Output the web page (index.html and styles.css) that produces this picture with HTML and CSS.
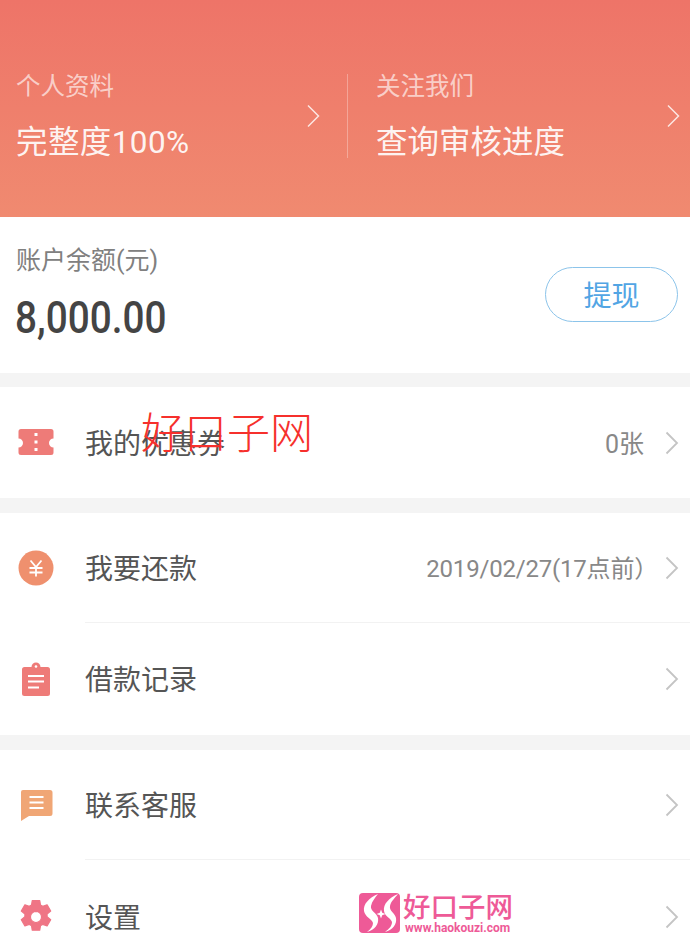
FILE: index.html
```html
<!DOCTYPE html>
<html lang="zh-CN">
<head>
    <meta charset="UTF-8">
    <meta name="viewport" content="width=device-width, initial-scale=1.0">
    <title>我的</title>
    <link rel="stylesheet" href="styles.css">
</head>
<body>

    <div class="page">
        <div class="head">
            <div class="head-col head-left">
                <div class="head-text">
                    <p class="head-label">个人资料</p>
                    <p class="head-value head-value-wide">完整度100%</p>
                </div>
                <svg class="head-arrow" viewBox="0 0 14 24"><path d="M2 1.500L12.500 12L2 22.500"/></svg>
            </div>
            <div class="head-col head-right">
                <div class="head-text">
                    <p class="head-label">关注我们</p>
                    <p class="head-value">查询审核进度</p>
                </div>
                <svg class="head-arrow" viewBox="0 0 14 24"><path d="M2 1.500L12.500 12L2 22.500"/></svg>
            </div>
        </div>

        <div class="balance">
            <div class="balance-text">
                <p class="balance-label">账户余额(元)</p>
                <p class="balance-num">8,000.00</p>
            </div>
            <button class="withdraw">提现</button>
        </div>

        <div class="group">
            <div class="row row-coupon">
                <svg class="icon" viewBox="0 0 36 36">
                    <path fill="#ee7b78" d="M3 4h30a2.500 2.500 0 0 1 2.500 2.500v7a4.500 4.500 0 0 0 0 9v5a2.500 2.500 0 0 1-2.500 2.500H3a2.500 2.500 0 0 1-2.500-2.500v-5a4.500 4.500 0 0 0 0-9v-7A2.500 2.500 0 0 1 3 4z"/>
                    <path fill="#fff" d="M16.500 8h3v3h-3zM16.500 15.500h3v3h-3zM16.500 23h3v3h-3z"/>
                </svg>
                <div class="row-body">
                    <span class="row-title">我的优惠券</span>
                    <span class="row-extra">0张</span>
                    <svg class="row-arrow" viewBox="0 0 14 24"><path d="M1.500 1.500L12 12L1.500 22.500"/></svg>
                </div>
            </div>
        </div>

        <div class="group">
            <div class="row">
                <svg class="icon" viewBox="0 0 36 36">
                    <circle fill="#ef906e" cx="18" cy="18" r="17.500"/>
                    <path fill="none" stroke="#fff" stroke-width="1.800" d="M12.500 10.500L18 17l5.500-6.500M11.500 18h13M11.500 22.500h13M18 17v9.500"/>
                </svg>
                <div class="row-body row-line">
                    <span class="row-title">我要还款</span>
                    <span class="row-extra row-date">2019/02/27(17点前）</span>
                    <svg class="row-arrow" viewBox="0 0 14 24"><path d="M1.500 1.500L12 12L1.500 22.500"/></svg>
                </div>
            </div>
            <div class="row row-tall">
                <svg class="icon" viewBox="0 0 36 36">
                    <path fill="#ee7b78" d="M6.500 6h7a4.500 4.500 0 0 1 9 0h7A2.500 2.500 0 0 1 32 8.500v24a2.500 2.500 0 0 1-2.500 2.500h-23A2.500 2.500 0 0 1 4 32.500v-24A2.500 2.500 0 0 1 6.500 6z"/>
                    <path fill="none" stroke="#fff" stroke-width="2" d="M10 15h16M10 20.500h16M10 26.500h11"/>
                    <circle fill="#fff" cx="18" cy="5.500" r="1.300"/>
                </svg>
                <div class="row-body">
                    <span class="row-title">借款记录</span>
                    <svg class="row-arrow" viewBox="0 0 14 24"><path d="M1.500 1.500L12 12L1.500 22.500"/></svg>
                </div>
            </div>
        </div>

        <div class="group">
            <div class="row">
                <svg class="icon" viewBox="0 0 36 36">
                    <path fill="#f0a675" d="M5 3h27a2.500 2.500 0 0 1 2.500 2.500v21a2.500 2.500 0 0 1-2.500 2.500H11l-8 5V5a2 2 0 0 1 2-2z"/>
                    <path fill="none" stroke="#fff" stroke-width="2" d="M11.500 10h14M11.500 15.500h14M11.500 21h14"/>
                </svg>
                <div class="row-body row-line">
                    <span class="row-title">联系客服</span>
                    <svg class="row-arrow" viewBox="0 0 14 24"><path d="M1.500 1.500L12 12L1.500 22.500"/></svg>
                </div>
            </div>
            <div class="row row-last">
                <svg class="icon" viewBox="0 0 24 24">
                    <path fill="#ef7585" stroke="#ef7585" stroke-width="0.800" stroke-linejoin="round" fill-rule="evenodd" d="M14.500 1l0.500 3 1.500 0.900 2.900-1 2.400 4.100-2.400 2 0 1.800 2.400 2-2.400 4.100-2.900-1-1.500 0.900-0.500 3H9.500l-0.500-3-1.500-0.900-2.900 1-2.400-4.100 2.400-2 0-1.800-2.400-2 2.400-4.100 2.900 1 1.500-0.900 0.500-3zM12 8.300a3.700 3.700 0 1 0 0 7.400 3.700 3.700 0 0 0 0-7.400z"/>
                </svg>
                <div class="row-body">
                    <span class="row-title">设置</span>
                    <svg class="row-arrow" viewBox="0 0 14 24"><path d="M1.500 1.500L12 12L1.500 22.500"/></svg>
                </div>
            </div>
        </div>

        <!-- watermarks on top of the screenshot -->
        <div class="mark-red">好口子网</div>
        <div class="mark-logo">
            <svg class="mark-icon" viewBox="0 0 41 41">
                <rect fill="#ee5a97" x="0" y="0" width="41" height="40" rx="4"/>
                <path fill="#fff" d="M19 1C10 5 4 11 5 18c1 6 8 8 9 12 0 3-2 6-6 9 8-2 12-8 11-14-1-5-8-7-7-12 1-5 4-8 7-12z"/>
                <path fill="#fff" d="M39 1C30 5 24 11 25 18c1 6 7 7 8 11 0 4-3 7-7 10 8-2 12-8 11-14-1-5-7-7-6-12 1-5 5-8 8-12z"/>
                <path fill="#fff" d="M22 16.500l1.200 3.300 3.300 1.200-3.300 1.200-1.200 3.300-1.200-3.300-3.300-1.200 3.300-1.200z"/>
            </svg>
            <div class="mark-text">
                <span class="mark-name">好口子网</span>
                <span class="mark-url">www.haokouzi.com</span>
            </div>
        </div>
    </div>

</body>
</html>
```

FILE: styles.css
```css
html, body {
    margin: 0;
    padding: 0;
    height: 948px;
    overflow: hidden;
}
body {
    font-family: Roboto, "Noto Sans CJK SC", sans-serif;
    background-color: #f4f4f4;
}
p {
    margin: 0;
}
.page {
    position: relative;
    width: 690px;
    height: 948px;
    overflow: hidden;
}

.head {
    display: flex;
    height: 217px;
    padding-top: 74px;
    box-sizing: border-box;
    align-items: flex-start;
    background: linear-gradient(180deg, #ee7468 0%, #f08a70 100%);
}
.head-col {
    display: flex;
    align-items: center;
    justify-content: space-between;
    height: 84px;
    box-sizing: border-box;
}
.head-left {
    width: 348px;
    padding: 0 27px 0 16px;
    border-right: 1px solid rgba(255, 255, 255, 0.3);
}
.head-right {
    width: 342px;
    padding: 0 10px 0 28px;
}
.head-label {
    font-size: 24.500px;
    line-height: 30px;
    color: rgba(255, 255, 255, 0.65);
}
.head-value {
    margin-top: 24px;
    font-size: 31.500px;
    line-height: 34px;
    color: rgba(255, 255, 255, 0.92);
}
.head-value-wide {
    letter-spacing: 0.400px;
}
.head-arrow {
    width: 14px;
    height: 24px;
}
.head-arrow path {
    fill: none;
    stroke: rgba(255, 255, 255, 0.8);
    stroke-width: 1.500;
}

.balance {
    display: flex;
    align-items: center;
    justify-content: space-between;
    height: 156px;
    margin-bottom: 14px;
    padding: 0 12px 2px 16px;
    box-sizing: border-box;
    background-color: white;
}
.balance-text {
    margin-bottom: 2px;
}
.balance-label {
    font-size: 25px;
    line-height: 28px;
    color: #808080;
}
.balance-num {
    margin-top: 21px;
    margin-left: -1px;
    font-size: 44px;
    line-height: 44px;
    font-weight: 500;
    color: #444;
    transform: scaleX(0.88);
    transform-origin: left center;
}
.withdraw {
    width: 133px;
    height: 55px;
    padding: 0;
    font-family: inherit;
    font-size: 28px;
    color: #52a5e4;
    background: white;
    border: 1px solid #8cc4ea;
    border-radius: 28px;
}

.group {
    margin-bottom: 15px;
    background-color: white;
}
.row {
    display: flex;
    align-items: center;
    height: 110px;
    padding-left: 18px;
}
.row-coupon {
    height: 111px;
}
.row-tall {
    height: 112px;
}
.row-last {
    height: 130px;
    padding-bottom: 16px;
    box-sizing: border-box;
}
.icon {
    flex: none;
    width: 36px;
    height: 36px;
    margin-right: 31px;
}
.row-body {
    display: flex;
    align-items: center;
    flex: 1;
    height: 100%;
    padding-right: 11px;
    box-sizing: border-box;
}
.row-line {
    border-bottom: 1px solid #f2f2f2;
}
.row-title {
    flex: 1;
    padding-bottom: 2px;
    font-size: 28px;
    color: #555;
}
.row-extra {
    margin-right: 21px;
    padding-bottom: 2px;
    font-size: 25px;
    color: #888;
}
.row-date {
    margin-right: 7px;
    font-size: 24px;
    letter-spacing: -0.200px;
}
.row-arrow {
    flex: none;
    width: 14px;
    height: 24px;
}
.row-arrow path {
    fill: none;
    stroke: #c4c4c4;
    stroke-width: 1.800;
}

.mark-red {
    position: absolute;
    left: 141px;
    top: 404px;
    font-size: 43px;
    line-height: 60px;
    font-weight: 200;
    color: #f6302c;
    white-space: nowrap;
}
.mark-logo {
    position: absolute;
    left: 359px;
    top: 893px;
    display: flex;
    gap: 3px;
}
.mark-icon {
    width: 41px;
    height: 41px;
}
.mark-text {
    display: flex;
    flex-direction: column;
    color: #ee5a97;
}
.mark-name {
    font-size: 27.500px;
    line-height: 29px;
    font-weight: 500;
    white-space: nowrap;
}
.mark-url {
    margin-left: 2px;
    font-size: 12px;
    line-height: 12px;
    font-weight: bold;
    white-space: nowrap;
}
```
